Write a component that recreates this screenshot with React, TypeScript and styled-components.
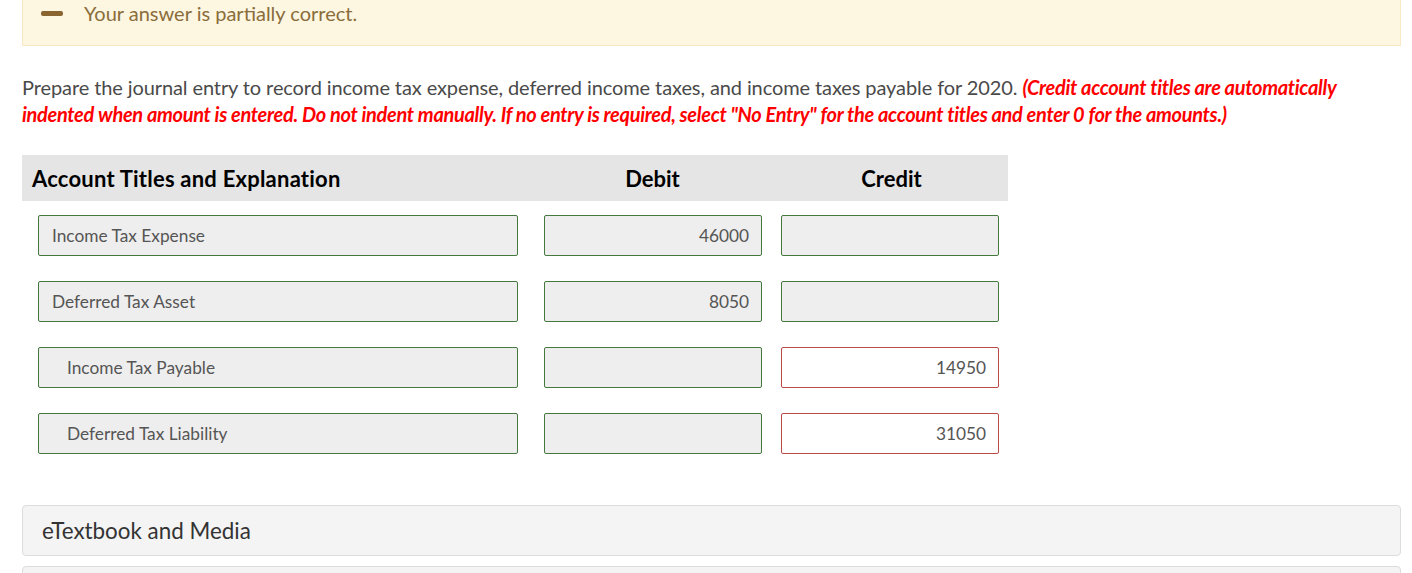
import React from 'react';
import styled, { createGlobalStyle } from 'styled-components';

const GlobalStyle = createGlobalStyle`
  body {
    margin: 0;
    background: #fff;
    font-family: Lato, "Open Sans", sans-serif;
    overflow: hidden;
  }
`;

interface Entry {
  account: string;
  debit: string;
  credit: string;
  indent?: boolean;
  creditWrong?: boolean;
}

const entries: Entry[] = [
  { account: 'Income Tax Expense', debit: '46000', credit: '' },
  { account: 'Deferred Tax Asset', debit: '8050', credit: '' },
  { account: 'Income Tax Payable', debit: '', credit: '14950', indent: true, creditWrong: true },
  { account: 'Deferred Tax Liability', debit: '', credit: '31050', indent: true, creditWrong: true },
];

const App = () => {
  return (
    <Page>
      <GlobalStyle />
      <Alert>
        <Dash />
        <span>Your answer is partially correct.</span>
      </Alert>

      <Question>
        Prepare the journal entry to record income tax expense, deferred income taxes, and income taxes payable for 2020.{' '}
        <Hint>
          (Credit account titles are automatically indented when amount is entered. Do not indent manually. If no entry is
          required, select "No Entry" for the account titles and enter 0 for the amounts.)
        </Hint>
      </Question>

      <Table>
        <HeadCell align='left'>Account Titles and Explanation</HeadCell>
        <HeadCell align='center'>Debit</HeadCell>
        <HeadCell align='center'>Credit</HeadCell>
        {entries.map((e) => (
          <React.Fragment key={e.account}>
            <Cell pad='16px'>
              <Field width='480px' indent={e.indent}>
                {e.account}
              </Field>
            </Cell>
            <Cell pad='14px'>
              <Field width='218px' right>
                {e.debit}
              </Field>
            </Cell>
            <Cell pad='6px'>
              <Field width='218px' right wrong={e.creditWrong}>
                {e.credit}
              </Field>
            </Cell>
          </React.Fragment>
        ))}
      </Table>

      <Panel>eTextbook and Media</Panel>
      <Panel />
    </Page>
  );
};

export default App;

const Page = styled.div`
  padding: 0 11px 0 22px;
`;

const Alert = styled.div`
  display: flex;
  align-items: center;
  height: 46px;
  padding: 0 0 19px 18px;
  box-sizing: border-box;
  background-color: #fdf6e1;
  border: 1px solid #f8e8c4;
  border-top: none;
  font-size: 20px;
  color: #8a6d3b;
  line-height: 28px;
`;

const Dash = styled.span`
  display: inline-block;
  width: 22px;
  height: 5px;
  border-radius: 2px;
  background-color: #8a6530;
  margin-right: 21px;
`;

const Question = styled.p`
  margin: 28px 0 0 0;
  font-size: 20px;
  line-height: 27px;
  color: #4a4a4a;
  letter-spacing: -0.1px;
`;

const Hint = styled.em`
  color: #ff0000;
  font-weight: 700;
  letter-spacing: -0.32px;
`;

const Table = styled.div`
  display: grid;
  grid-template-columns: 508px 245px 233px;
  margin-top: 27px;
  row-gap: 25px;
`;

const HeadCell = styled.div<{ align: string }>`
  height: 46px;
  display: flex;
  align-items: center;
  justify-content: ${(p) => (p.align === 'left' ? 'flex-start' : 'center')};
  padding-left: ${(p) => (p.align === 'left' ? '10px' : '0')};
  background-color: #e5e5e5;
  font-size: 22px;
  font-weight: 700;
  letter-spacing: ${(p) => (p.align === 'left' ? '0.22px' : '0')};
  color: #000;
  margin-bottom: -11px;
`;

const Cell = styled.div<{ pad: string }>`
  padding-left: ${(p) => p.pad};
`;

const Field = styled.div<{ width: string; right?: boolean; indent?: boolean; wrong?: boolean }>`
  box-sizing: border-box;
  width: ${(p) => p.width};
  height: 41px;
  display: flex;
  align-items: center;
  justify-content: ${(p) => (p.right ? 'flex-end' : 'flex-start')};
  padding: 0 12px 0 ${(p) => (p.indent ? '28px' : '13px')};
  border: 1px solid ${(p) => (p.wrong ? '#b94a48' : '#44783f')};
  border-radius: 2px;
  background-color: ${(p) => (p.wrong ? '#fff' : '#eeeeee')};
  font-size: 17.3px;
  color: #555;
`;

const Panel = styled.div`
  box-sizing: border-box;
  height: 51px;
  display: flex;
  align-items: center;
  margin-top: 51px;
  padding-left: 19px;
  background-color: #f4f4f4;
  border: 1px solid #dcdcdc;
  border-radius: 4px;
  font-size: 22.4px;
  color: #333;

  & + & {
    margin-top: 10px;
  }
`;
